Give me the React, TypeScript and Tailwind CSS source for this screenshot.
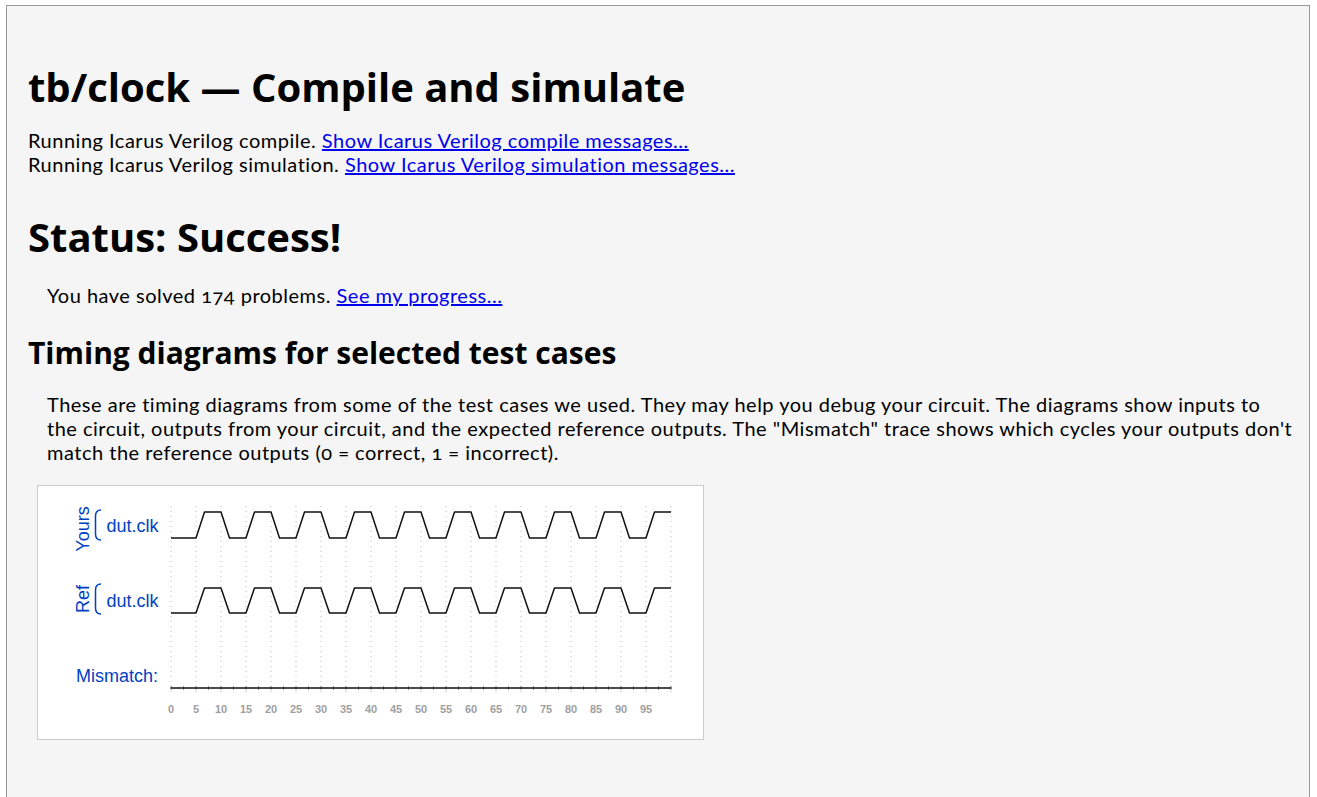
import React from 'react';

const BLUE = '#0041c4';

const X0 = 133;
const UNIT = 5;

function clockPath(yHigh: number, yLow: number): string {
    const slope = 8.5;
    let d = `M${X0},${yLow}`;
    let level = 0;
    for (let t = 5; t < 100; t += 5) {
        const x = X0 + t * UNIT;
        const from = level ? yHigh : yLow;
        const to = level ? yLow : yHigh;
        d += ` L${x},${from} L${x + slope},${to}`;
        level = 1 - level;
    }
    d += ` L${X0 + 100 * UNIT},${level ? yHigh : yLow}`;
    return d;
}

const TimingDiagram: React.FC = () => {
    const grid = Array.from({ length: 21 }, (_, i) => X0 + i * 25);
    const ticks = Array.from({ length: 20 }, (_, i) => i * 5);
    const minor = Array.from({ length: 41 }, (_, i) => X0 + i * 12.5);
    return (
        <div className="ml-[9px] w-[667px] h-[255px] border border-[#cccccc] bg-white tracking-normal">
            <svg width="665" height="253" className="block">
                <defs>
                    <clipPath id="lane-clip">
                        <rect x={0} y={19} width={665} height={234} />
                    </clipPath>
                </defs>
                {grid.map((x) => (
                    <line key={x} x1={x} y1={20} x2={x} y2={208} stroke="#bbbbbb" strokeWidth={1} strokeDasharray="1 4" />
                ))}
                <g clipPath="url(#lane-clip)">
                    <text x={51} y={43} transform="rotate(-90 51 43)" textAnchor="middle" fill={BLUE} fontSize={18} fontFamily="'Liberation Sans', Arial, sans-serif">Yours</text>
                </g>
                <text x={51} y={113} transform="rotate(-90 51 113)" textAnchor="middle" fill={BLUE} fontSize={18} fontFamily="'Liberation Sans', Arial, sans-serif">Ref</text>
                <path d="M63,24 Q57.5,24 57.5,30 L57.5,48 Q57.5,54 63,54" fill="none" stroke={BLUE} strokeWidth={1.5} />
                <path d="M63,98 Q57.5,98 57.5,104 L57.5,122 Q57.5,128 63,128" fill="none" stroke={BLUE} strokeWidth={1.5} />
                <text x={68.5} y={46} fill={BLUE} fontSize={18} fontFamily="'Liberation Sans', Arial, sans-serif">dut.clk</text>
                <text x={68.5} y={121} fill={BLUE} fontSize={18} fontFamily="'Liberation Sans', Arial, sans-serif">dut.clk</text>
                <text x={38} y={196} fill={BLUE} fontSize={18} fontFamily="'Liberation Sans', Arial, sans-serif">Mismatch:</text>
                <path d={clockPath(26, 52)} fill="none" stroke="#111111" strokeWidth={1.5} strokeLinejoin="round" />
                <path d={clockPath(102, 127)} fill="none" stroke="#111111" strokeWidth={1.5} strokeLinejoin="round" />
                <line x1={X0} y1={202} x2={X0 + 500} y2={202} stroke="#111111" strokeWidth={1.5} />
                {minor.map((x) => (
                    <line key={x} x1={x} y1={200.5} x2={x} y2={203.5} stroke="#333333" strokeWidth={1} />
                ))}
                {ticks.map((t) => (
                    <text key={t} x={X0 + t * UNIT} y={227} textAnchor="middle" fill="#a0a0a0" fontSize={11} fontWeight={700} fontFamily="'Liberation Sans', Arial, sans-serif">{t}</text>
                ))}
            </svg>
        </div>
    );
};

export default function App() {
    return (
        <div className="min-h-[797px] bg-white pt-[5px] pl-[6px] pr-[7px]">
            <div className="min-h-[792px] border border-[#999999] border-b-0 bg-[#f5f5f5] pl-[21px] pr-[20px] pt-[57px] text-black font-['Lato',sans-serif] text-[20px] leading-[24px] tracking-[0.5px] oldstyle-nums">
                <h1 className="font-['Open_Sans',sans-serif] font-bold text-[40px] leading-[48px] tracking-normal">
                    tb/clock — Compile and simulate
                </h1>
                <div className="mt-[17px]">
                    <div>
                        Running Icarus Verilog compile.{' '}
                        <a href="#" className="text-[#0000ee] underline">Show Icarus Verilog compile messages...</a>
                    </div>
                    <div>
                        Running Icarus Verilog simulation.{' '}
                        <a href="#" className="text-[#0000ee] underline">Show Icarus Verilog simulation messages...</a>
                    </div>
                </div>
                <h1 className="mt-[37px] font-['Open_Sans',sans-serif] font-bold text-[40px] leading-[48px] tracking-normal">
                    Status: Success!
                </h1>
                <p className="mt-[22px] ml-[19px]">
                    You have solved 174 problems.{' '}
                    <a href="#" className="text-[#0000ee] underline">See my progress...</a>
                </p>
                <h2 className="mt-[28px] font-['Open_Sans',sans-serif] font-bold text-[30px] leading-[36px] tracking-normal">
                    Timing diagrams for selected test cases
                </h2>
                <p className="mt-[21px] ml-[19px] whitespace-nowrap">
                    These are timing diagrams from some of the test cases we used. They may help you debug your circuit. The diagrams show inputs to
                    <br />
                    the circuit, outputs from your circuit, and the expected reference outputs. The "Mismatch" trace shows which cycles your outputs don't
                    <br />
                    match the reference outputs (0 = correct, 1 = incorrect).
                </p>
                <div className="mt-[21px]">
                    <TimingDiagram />
                </div>
            </div>
        </div>
    );
}
